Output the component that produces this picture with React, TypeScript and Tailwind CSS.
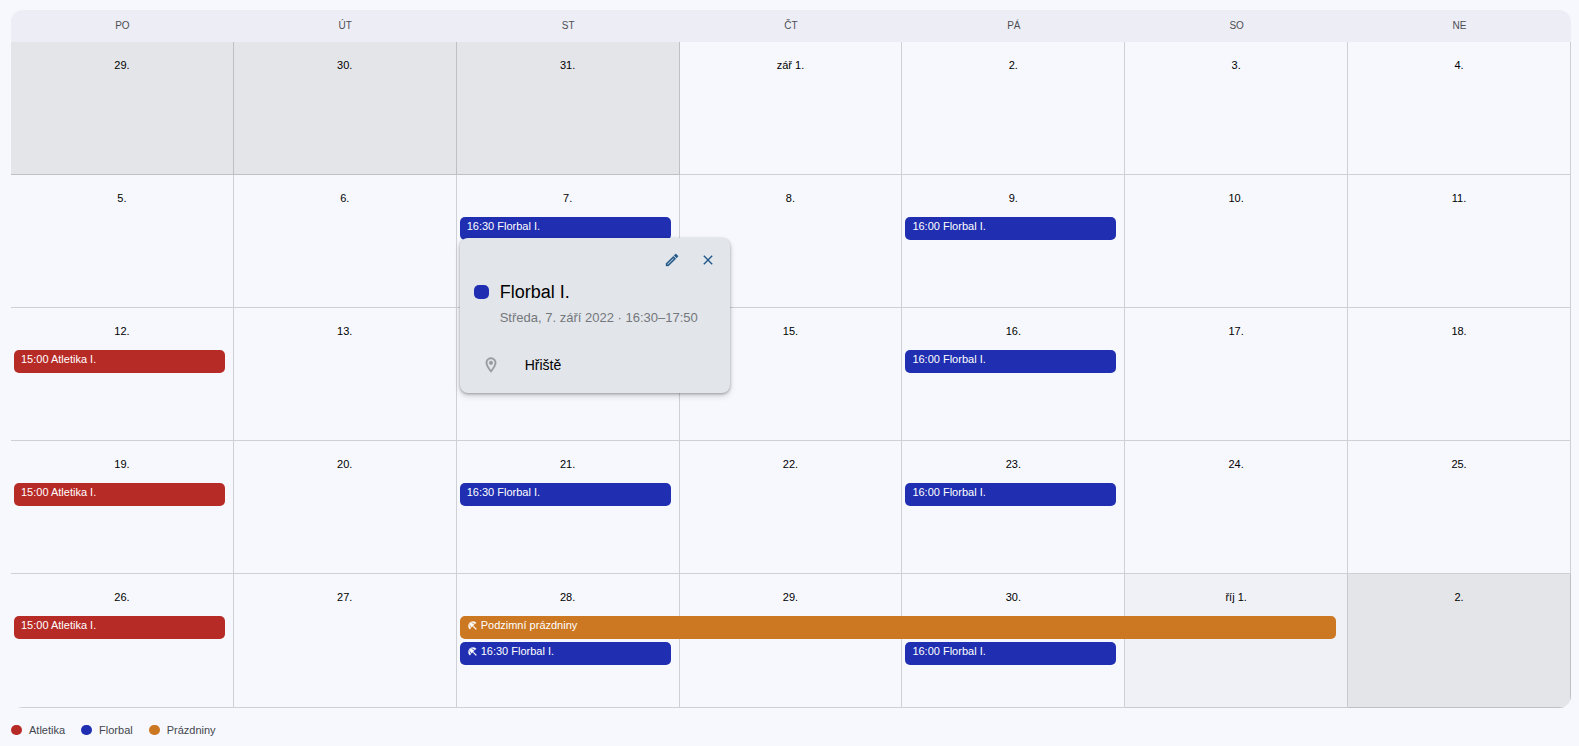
import type { ReactNode } from "react";
import { MdClose } from "react-icons/md";

type Kind = "atletika" | "florbal" | "prazdniny";

interface CalendarEvent {
  kind: Kind;
  label: string;
  days?: number;
  holiday?: boolean;
  popup?: ReactNode;
}

interface Day {
  label: string;
  tone?: "outside" | "muted";
  events?: CalendarEvent[];
}

const fill: Record<Kind, string> = {
  atletika: "bg-[#b72b27]",
  florbal: "bg-[#202fb1]",
  prazdniny: "bg-[#cc7722]",
};

const toneFill = {
  outside: "bg-[#e4e5e9]",
  muted: "bg-[#f0f1f6]",
};

const atletika: CalendarEvent = { kind: "atletika", label: "15:00 Atletika I." };
const florbalWed: CalendarEvent = { kind: "florbal", label: "16:30 Florbal I." };
const florbalFri: CalendarEvent = { kind: "florbal", label: "16:00 Florbal I." };

function Icon({ path, weight, className }: { path: string; weight: number; className: string }) {
  return (
    <svg
      viewBox="0 0 24 24"
      fill="currentColor"
      stroke="currentColor"
      strokeWidth={weight}
      aria-hidden="true"
      className={className}
    >
      <path d={path} />
    </svg>
  );
}

const pencilPath =
  "M14.06 9.02l.92.92L5.92 19H5v-.92l9.06-9.06M17.66 3c-.25 0-.51.1-.7.29l-1.83 1.83 3.75 3.75 1.83-1.83a.996.996 0 0 0 0-1.41l-2.34-2.34c-.2-.2-.45-.29-.71-.29zm-3.6 3.19L3 17.25V21h3.75L17.81 9.94l-3.75-3.75z";
const placePath =
  "M12 2C8.13 2 5 5.13 5 9c0 5.25 7 13 7 13s7-7.75 7-13c0-3.87-3.13-7-7-7zM7 9c0-2.76 2.24-5 5-5s5 2.24 5 5c0 2.88-2.88 7.19-5 9.88C9.92 16.21 7 11.85 7 9zm5-2.5a2.5 2.5 0 1 0 0 5a2.5 2.5 0 1 0 0-5z";
const beachPath =
  "M13.127 14.56l1.43-1.43 6.44 6.443L19.57 21zm4.293-5.73l2.86-2.86c-3.95-3.95-10.35-3.96-14.3-.02 3.93-1.3 8.31-.25 11.44 2.88zM5.95 5.98c-3.94 3.95-3.93 10.35.02 14.3l2.86-2.86C5.7 14.29 4.65 9.91 5.95 5.98zm.02-.02l-.01.01c-.38 3.01 1.17 6.88 4.3 10.02l5.73-5.73c-3.13-3.13-7.01-4.68-10.02-4.3z";

function EventPopup() {
  return (
    <div
      role="dialog"
      aria-labelledby="popup-title"
      className="absolute top-[21px] left-0 z-30 w-[270px] rounded-lg bg-[#e2e5e9] pb-4 shadow-[0_1px_3px_rgba(0,0,0,0.3),0_3px_6px_rgba(0,0,0,0.15)]"
    >
      <div className="flex justify-end gap-3 px-2.5 pt-2.5 text-[#1d5687]">
        <button type="button" aria-label="Upravit" className="flex size-6 items-center justify-center">
          <Icon path={pencilPath} weight={0.5} className="size-4" />
        </button>
        <button type="button" aria-label="Zavřít" className="flex size-6 items-center justify-center">
          <MdClose className="size-4" />
        </button>
      </div>
      <div className="flex gap-[11px] pt-1.5 pl-3.5">
        <span className="mt-[7px] h-3.5 w-[15px] shrink-0 rounded-[5px] bg-[#202fb1]" />
        <div>
          <h2 id="popup-title" className="text-[18px] leading-7 text-black">
            Florbal I.
          </h2>
          <p className="text-[13px] leading-6 whitespace-nowrap text-[#74777c]">
            Středa, 7. září 2022 · 16:30–17:50
          </p>
        </div>
      </div>
      <div className="flex items-center gap-[25px] pt-[23px] pl-[22px]">
        <Icon path={placePath} weight={0.4} className="size-[18px] text-[#97999d]" />
        <p className="text-[14px] leading-6 text-black">Hřiště</p>
      </div>
    </div>
  );
}

const weeks: Day[][] = [
  [
    { label: "29.", tone: "outside" },
    { label: "30.", tone: "outside" },
    { label: "31.", tone: "outside" },
    { label: "zář 1." },
    { label: "2." },
    { label: "3." },
    { label: "4." },
  ],
  [
    { label: "5." },
    { label: "6." },
    { label: "7.", events: [{ ...florbalWed, popup: <EventPopup /> }] },
    { label: "8." },
    { label: "9.", events: [florbalFri] },
    { label: "10." },
    { label: "11." },
  ],
  [
    { label: "12.", events: [atletika] },
    { label: "13." },
    { label: "14." },
    { label: "15." },
    { label: "16.", events: [florbalFri] },
    { label: "17." },
    { label: "18." },
  ],
  [
    { label: "19.", events: [atletika] },
    { label: "20." },
    { label: "21.", events: [florbalWed] },
    { label: "22." },
    { label: "23.", events: [florbalFri] },
    { label: "24." },
    { label: "25." },
  ],
  [
    { label: "26.", events: [atletika] },
    { label: "27." },
    {
      label: "28.",
      events: [
        { kind: "prazdniny", label: "Podzimní prázdniny", days: 4, holiday: true },
        { ...florbalWed, holiday: true },
      ],
    },
    { label: "29." },
    { label: "30.", events: [florbalFri] },
    { label: "říj 1.", tone: "muted" },
    { label: "2.", tone: "outside" },
  ],
];

function EventBar({ event, lane }: { event: CalendarEvent; lane: number }) {
  const wide = event.days === 4;
  return (
    <div className={`relative ${event.popup ? "z-30" : "z-10"} ${lane > 0 ? "mt-[3px]" : ""}`}>
      <button
        type="button"
        className={`flex h-[23px] items-start gap-[3px] rounded-[5px] px-[7px] pt-px text-left text-[11px] leading-4 whitespace-nowrap text-white ${
          fill[event.kind]
        } ${wide ? "w-[calc(400%+33px)]" : "w-full"}`}
      >
        {event.holiday && <Icon path={beachPath} weight={0.5} className="mt-[3px] size-[11px] shrink-0" />}
        {event.label}
      </button>
      {event.popup}
    </div>
  );
}

function DayCell({ day, spacer }: { day: Day; spacer: boolean }) {
  return (
    <td
      className={`h-[133px] border-r border-b border-black/16 p-0 align-top ${day.tone ? toneFill[day.tone] : ""}`}
    >
      <div className="pt-[15px] pb-[11px] text-center text-[11px] leading-4 text-black">{day.label}</div>
      <div className="pr-2 pl-[3px]">
        {spacer && <div className="h-[26px]" />}
        {day.events?.map((event, lane) => (
          <EventBar key={event.label} event={event} lane={lane} />
        ))}
      </div>
    </td>
  );
}

const legend: { kind: Kind; label: string }[] = [
  { kind: "atletika", label: "Atletika" },
  { kind: "florbal", label: "Florbal" },
  { kind: "prazdniny", label: "Prázdniny" },
];

export default function App() {
  return (
    <main className="min-h-screen bg-[#f6f8fd] pt-2.5 pr-2 pl-[11px] font-['Liberation_Sans',Arial,sans-serif]">
      <div className="overflow-hidden rounded-xl">
        <table className="w-full table-fixed border-separate border-spacing-0">
          <thead>
            <tr>
              {["PO", "ÚT", "ST", "ČT", "PÁ", "SO", "NE"].map((name) => (
                <th
                  key={name}
                  scope="col"
                  className="h-8 bg-[#ecedf5] p-0 text-center text-[10px] leading-4 font-normal text-[#4c4d53]"
                >
                  {name}
                </th>
              ))}
            </tr>
          </thead>
          <tbody>
            {weeks.map((week, row) => (
              <tr key={row} className="last:h-[134px]">
                {week.map((day, col) => (
                  <DayCell key={col} day={day} spacer={row === 4 && col === 4} />
                ))}
              </tr>
            ))}
          </tbody>
        </table>
      </div>
      <ul className="flex gap-4 pt-3.5 text-[11px] leading-4 text-[#44474e]">
        {legend.map(({ kind, label }) => (
          <li key={kind} className="flex items-center gap-[7px]">
            <span className={`h-2.5 w-[11px] rounded-full ${fill[kind]}`} />
            {label}
          </li>
        ))}
      </ul>
    </main>
  );
}
